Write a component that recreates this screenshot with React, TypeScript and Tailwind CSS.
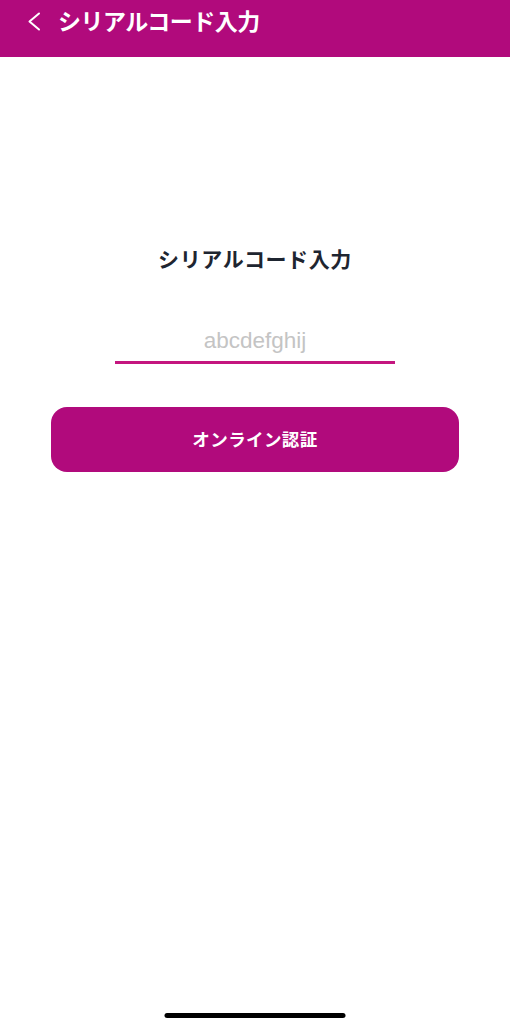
export default function App() {
  return (
    <div
      className="relative flex h-[1024px] w-[510px] flex-col bg-white"
      style={{ fontFamily: '"Noto Sans CJK JP", "Noto Sans", sans-serif' }}
    >
      {/* header */}
      <header className="flex h-[57px] items-start bg-[#b10a7c] pl-[27px] pt-[5px] text-white">
        <svg width="15" height="19" viewBox="0 0 15 19" className="mt-[7px] mr-[16px]" fill="none">
          <path d="M12 1.5 L2.5 9.5 L12 17.5" stroke="white" strokeWidth="2" strokeLinecap="round" strokeLinejoin="round" />
        </svg>
        <h1 className="text-[23px] font-bold leading-[30px] tracking-[-0.5px]">シリアルコード入力</h1>
      </header>

      <main className="flex flex-col items-center">
        <h2 className="mt-[187px] text-[21px] font-bold leading-[28px] tracking-[0.6px] text-[#1e2530]">
          シリアルコード入力
        </h2>

        <div className="mt-[55px] w-[280px] border-b-[3px] border-[#c4167f] pb-[6px] text-center">
          <input
            className="w-full text-center text-[22.5px] leading-[28px] text-[#333] outline-none placeholder:text-[#c4c4c4]"
            style={{ fontFamily: '"Liberation Sans", Arial, sans-serif' }}
            placeholder="abcdefghij"
          />
        </div>

        <button className="mt-[43px] h-[65px] w-[408px] rounded-[16px] bg-[#b10a7c] text-[17.5px] font-bold tracking-[0.4px] text-white">
          オンライン認証
        </button>
      </main>

      <div className="absolute bottom-[6px] left-1/2 h-[5px] w-[181px] -translate-x-1/2 rounded-full bg-black" />
    </div>
  );
}
